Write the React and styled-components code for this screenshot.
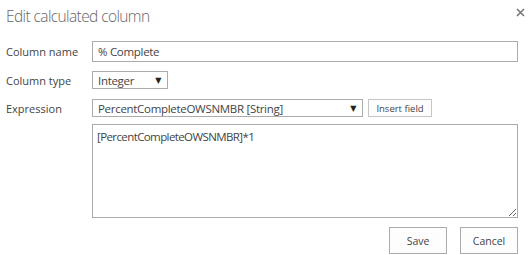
import React from "react";
import styled, { createGlobalStyle } from "styled-components";

const GlobalStyle = createGlobalStyle`
  html, body {
    margin: 0;
    padding: 0;
    background: #ffffff;
  }
  body {
    font-family: "Open Sans", "Noto Sans", "Liberation Sans", sans-serif;
    color: #444444;
  }
`;

const Dialog = styled.div`
  width: 532px;
  height: 255px;
  box-sizing: border-box;
  padding: 0 14px 0 6px;
  display: flex;
  flex-direction: column;
  overflow: hidden;
`;

const Header = styled.div`
  height: 41px;
  display: flex;
  justify-content: space-between;
  align-items: flex-start;
`;

const Title = styled.h1`
  margin: 5px 0 0 0;
  font-size: 15.5px;
  line-height: 22px;
  font-weight: 300;
  letter-spacing: -0.6px;
  color: #666666;
`;

const Close = styled.div`
  margin: 6px -8px 0 0;
  width: 12px;
  height: 12px;
  display: flex;
  align-items: center;
  justify-content: center;
`;

const Row = styled.div`
  display: flex;
  align-items: ${(p) => (p.$top ? "flex-start" : "center")};
  margin-bottom: ${(p) => p.$gap || 0}px;
`;

const Label = styled.div`
  width: 86px;
  flex-shrink: 0;
  font-size: 11px;
  color: #444444;
`;

const TextInput = styled.div`
  flex: 1;
  height: 21px;
  box-sizing: border-box;
  border: 1px solid #ababab;
  padding: 0 5px;
  font-size: 11.5px;
  letter-spacing: -0.3px;
  line-height: 19px;
  color: #444444;
`;

const SelectBox = styled.div`
  width: ${(p) => p.$width}px;
  height: 18px;
  box-sizing: border-box;
  border: 1px solid #ababab;
  padding: 0 6px 0 5px;
  display: flex;
  align-items: center;
  justify-content: space-between;
  font-size: 11.5px;
  letter-spacing: -0.3px;
  color: #444444;
  background: #ffffff;
`;

const Arrow = styled.span`
  font-family: "DejaVu Sans", sans-serif;
  font-size: 8px;
  color: #222222;
  margin-top: 1px;
`;

const SmallButton = styled.div`
  margin-left: 5px;
  width: 64px;
  height: 18px;
  box-sizing: border-box;
  border: 1px solid #c6c6c6;
  background: #fdfdfd;
  font-size: 9.5px;
  display: flex;
  align-items: center;
  justify-content: center;
  color: #444444;
`;

const Spacer = styled.div`
  width: 86px;
  flex-shrink: 0;
`;

const Area = styled.textarea`
  flex: 1;
  height: 94px;
  box-sizing: border-box;
  border: 1px solid #ababab;
  padding: 4px 4px;
  margin: 0;
  font-family: "Open Sans", "Noto Sans", "Liberation Sans", sans-serif;
  font-size: 11.5px;
  letter-spacing: -0.6px;
  line-height: 16px;
  color: #444444;
  resize: both;
  outline: none;
`;

const Footer = styled.div`
  display: flex;
  justify-content: flex-end;
  gap: 13px;
`;

const Button = styled.div`
  width: 58px;
  height: 27px;
  box-sizing: border-box;
  border: 1px solid #ababab;
  background: #fdfdfd;
  font-size: 10.5px;
  color: #444444;
  display: flex;
  align-items: center;
  justify-content: center;
`;

export default function App() {
  return (
    <>
      <GlobalStyle />
      <Dialog>
        <Header>
          <Title>Edit calculated column</Title>
          <Close>
            <svg width="9" height="9" viewBox="0 0 9 9">
              <path d="M1 1L8 8M8 1L1 8" stroke="#777" strokeWidth="1.6" />
            </svg>
          </Close>
        </Header>
        <Row $gap={9}>
          <Label>Column name</Label>
          <TextInput>% Complete</TextInput>
        </Row>
        <Row $gap={10}>
          <Label>Column type</Label>
          <SelectBox $width={76}>
            Integer
            <Arrow>▼</Arrow>
          </SelectBox>
        </Row>
        <Row $gap={7}>
          <Label>Expression</Label>
          <SelectBox $width={271}>
            PercentCompleteOWSNMBR [String]
            <Arrow>▼</Arrow>
          </SelectBox>
          <SmallButton>Insert field</SmallButton>
        </Row>
        <Row $top $gap={9}>
          <Spacer />
          <Area defaultValue="[PercentCompleteOWSNMBR]*1" />
        </Row>
        <Footer>
          <Button>Save</Button>
          <Button>Cancel</Button>
        </Footer>
      </Dialog>
    </>
  );
}
